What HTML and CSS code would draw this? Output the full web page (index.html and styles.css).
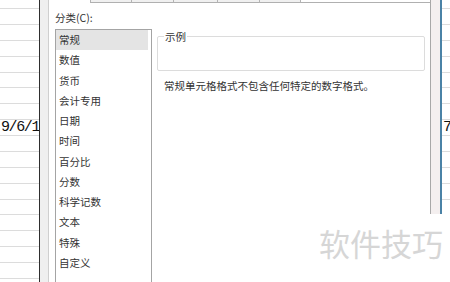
FILE: index.html
```html
<!DOCTYPE html>
<html lang="zh-CN">
<head>
    <meta charset="UTF-8">
    <title>设置单元格格式 - 数字</title>
    <link rel="stylesheet" href="styles.css">
</head>
<body>

<div class="screen">

    <!-- 左侧工作表 -->
    <div class="sheet sheet-left">
        <div class="row row-first"></div>
        <div class="row"></div>
        <div class="row"></div>
        <div class="row"></div>
        <div class="row"></div>
        <div class="row"></div>
        <div class="row"></div>
        <div class="row"></div>
        <div class="row"><span class="cell">9/6/17</span></div>
        <div class="row"></div>
        <div class="row"></div>
        <div class="row"></div>
        <div class="row"></div>
        <div class="row"></div>
        <div class="row"></div>
        <div class="row"></div>
        <div class="row"></div>
        <div class="row"></div>
    </div>

    <!-- 对话框 -->
    <div class="dialog">
        <div class="panel">
            <div class="tabs">
                <span class="tab active"></span>
                <span class="tab" style="width: 41px"></span>
                <span class="tab" style="width: 42px"></span>
                <span class="tab" style="width: 44px"></span>
                <span class="tab" style="width: 42px"></span>
                <span class="tab" style="width: 41px"></span>
                <span class="tab-rest"></span>
            </div>
            <div class="panel-body">
                <div class="label">分类(C):</div>
                <div class="columns">
                    <ul class="list">
                        <li class="selected">常规</li>
                        <li>数值</li>
                        <li>货币</li>
                        <li>会计专用</li>
                        <li>日期</li>
                        <li>时间</li>
                        <li>百分比</li>
                        <li>分数</li>
                        <li>科学记数</li>
                        <li>文本</li>
                        <li>特殊</li>
                        <li>自定义</li>
                    </ul>
                    <div class="detail">
                        <fieldset class="sample">
                            <legend>示例</legend>
                        </fieldset>
                        <p class="desc">常规单元格格式不包含任何特定的数字格式。</p>
                    </div>
                </div>
            </div>
        </div>
        <div class="frame-right"></div>
    </div>

    <!-- 右侧工作表 -->
    <div class="sheet sheet-right">
        <div class="row row-first"></div>
        <div class="row"></div>
        <div class="row"></div>
        <div class="row"></div>
        <div class="row"></div>
        <div class="row"></div>
        <div class="row"></div>
        <div class="row"></div>
        <div class="row"><span class="cell">7</span></div>
        <div class="row"></div>
        <div class="row"></div>
        <div class="row"></div>
        <div class="row"></div>
        <div class="row"></div>
        <div class="row"></div>
        <div class="row"></div>
        <div class="row"></div>
        <div class="row"></div>
    </div>

    <div class="watermark">软件技巧</div>
</div>

</body>
</html>
```

FILE: styles.css
```css
* {
    margin: 0;
    padding: 0;
    box-sizing: border-box;
}

body {
    font-family: 'Noto Sans CJK SC', 'Noto Sans', sans-serif;
    background-color: #fff;
    color: #333;
}

.screen {
    position: relative;
    display: flex;
    width: 450px;
    height: 282px;
    overflow: hidden;
    background-color: #fff;
}

/* 工作表 */
.sheet {
    flex: none;
    overflow: hidden;
}

.sheet-left {
    width: 39px;
}

.sheet-right {
    width: 8px;
}

.row {
    height: 15.88px;
    border-bottom: 1px solid #dcdcdc;
    white-space: nowrap;
}

.row-first {
    height: 9px;
}

.cell {
    display: block;
    font-family: 'Liberation Mono', monospace;
    font-size: 15px;
    letter-spacing: -1.4px;
    line-height: 16px;
    color: #111;
    padding-left: 1px;
}

/* 对话框 */
.dialog {
    flex: none;
    display: flex;
    width: 403px;
    height: 282px;
    border-left: 1px solid #2e2e2e;
    padding-left: 8px;
    background-color: #efefef;
}

.panel {
    flex: none;
    width: 383px;
    background-color: #fff;
    border-left: 1px solid #cfcfcf;
    border-right: 1px solid #a8a8a8;
}

.frame-right {
    flex: none;
    width: 11px;
    background-color: #f4efef;
    border-right: 2px solid #4a82a6;
}

.tabs {
    display: flex;
    height: 3px;
}

.tab {
    flex: none;
    height: 3px;
    background-color: #f0f0f0;
    border-left: 1px solid #b4b4b4;
    border-bottom: 1px solid #b0b0b0;
}

.tab.active {
    width: 41px;
    background-color: #fff;
    border: none;
}

.tab-rest {
    flex: 1;
    border-left: 1px solid #b4b4b4;
    border-bottom: 1px solid #b0b0b0;
}

.panel-body {
    padding: 8px 5px 0 6px;
    font-size: 10.5px;
}

.label {
    line-height: 14px;
    margin-bottom: 4px;
}

.columns {
    display: flex;
    gap: 5px;
}

.list {
    list-style: none;
    flex: none;
    width: 97px;
    height: 260px;
    border: 1px solid #a4a4a4;
    padding: 0 3px 0 0;
}

.list li {
    height: 20.25px;
    line-height: 20.25px;
    padding-left: 3px;
}

.list li.selected {
    background-color: #e4e4e4;
}

.detail {
    flex: 1;
}

.sample {
    margin-top: 1px;
    height: 41px;
    border: 1px solid #dcdcdc;
    border-radius: 2px;
    padding: 0 6px;
}

.sample legend {
    padding: 0 1px;
    line-height: 13px;
}

.desc {
    margin-top: 8px;
    padding-left: 7px;
    line-height: 14px;
}

/* 水印 */
.watermark {
    position: absolute;
    left: 300px;
    top: 214px;
    width: 150px;
    height: 68px;
    background-color: #fff;
    color: #d6d6d6;
    font-size: 31px;
    line-height: 36px;
    padding: 11px 0 0 19px;
    white-space: nowrap;
}
```
